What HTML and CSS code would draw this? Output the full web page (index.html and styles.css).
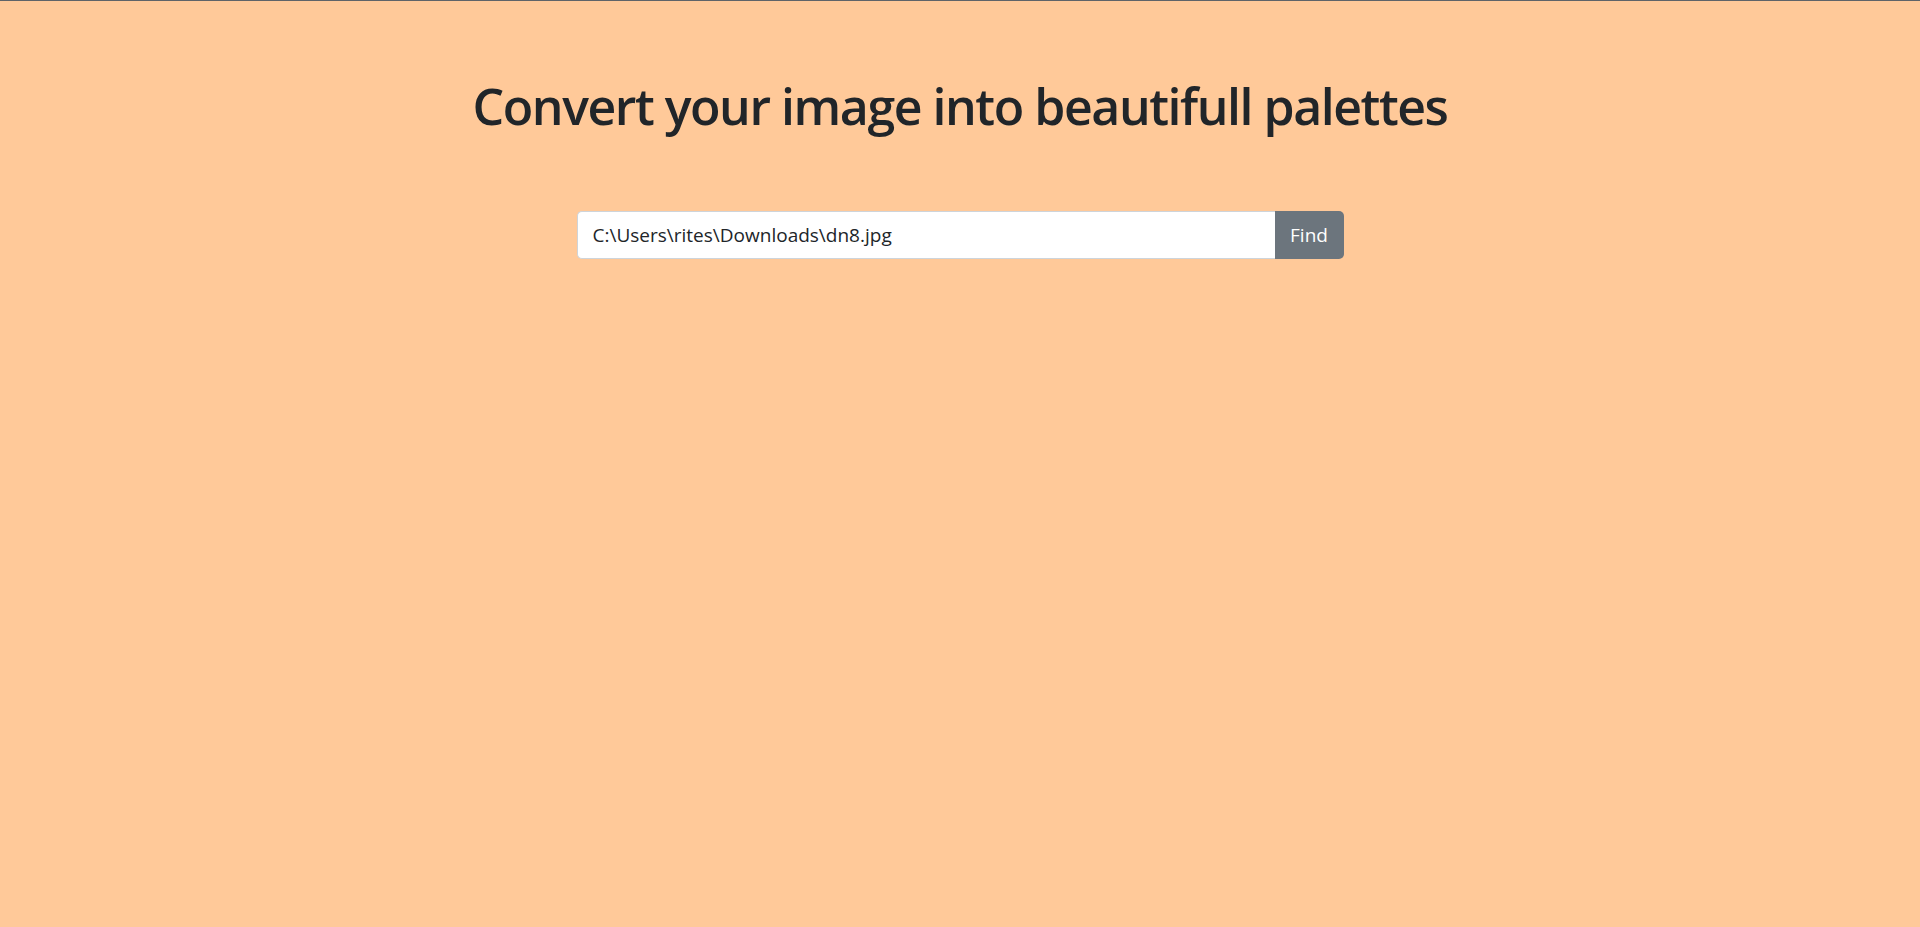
FILE: index.html
```html
<!DOCTYPE html>
<html>
<head>
<meta charset="utf-8">
<link rel="stylesheet" href="styles.css">
</head>
<body>
<main class="page">
  <h1 class="title">Convert your image into beautifull palettes</h1>
  <form class="search">
    <input class="search-input" type="text" value="C:\Users\rites\Downloads\dn8.jpg">
    <button class="search-btn" type="button">Find</button>
  </form>
</main>
</body>
</html>
```
FILE: styles.css
```css
html, body {
  margin: 0;
  padding: 0;
  height: 100%;
}
body {
  background: #ffc999;
  border-top: 1px solid #5f6368;
  box-sizing: border-box;
  font-family: "Open Sans", "Noto Sans", sans-serif;
  color: #212529;
}
.page {
  display: flex;
  flex-direction: column;
  align-items: center;
  padding-top: 75px;
}
.title {
  margin: 0;
  font-size: 50px;
  font-weight: 600;
  line-height: 60px;
  letter-spacing: -1.45px;
}
.search {
  display: flex;
  margin-top: 75px;
  width: 767px;
  height: 48px;
}
.search-input {
  flex: 1;
  min-width: 0;
  box-sizing: border-box;
  height: 48px;
  border: 1px solid #ced4da;
  border-right: none;
  border-radius: 5px 0 0 5px;
  background: #fff;
  padding: 0 15px;
  font-family: inherit;
  font-size: 19px;
  color: #212529;
  outline: none;
}
.search-btn {
  width: 69px;
  height: 48px;
  border: none;
  border-radius: 0 5px 5px 0;
  background: #6c757d;
  color: #fff;
  font-family: inherit;
  font-size: 19px;
  padding: 0;
}
```
